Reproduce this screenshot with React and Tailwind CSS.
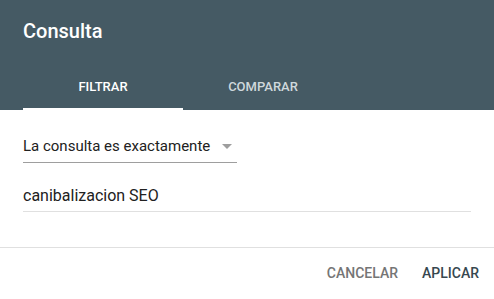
export default function App() {
  return (
    <div className="w-[494px] h-[299px] bg-white overflow-hidden" style={{ fontFamily: "Roboto, 'Liberation Sans', sans-serif" }}>
      <div className="bg-[#455a64] h-[110px] flex flex-col">
        <h1 className="pl-[23px] pt-[19px] text-[20px] leading-[24px] font-medium text-white">Consulta</h1>
        <div className="mt-auto flex pl-[23px]">
          <div className="w-[160px] h-[47px] flex flex-col">
            <span className="flex-1 flex items-center justify-center pt-[2px] text-[13px] font-medium text-white">FILTRAR</span>
            <span className="h-[2px] bg-white" />
          </div>
          <div className="w-[160px] h-[47px] flex flex-col">
            <span className="flex-1 flex items-center justify-center pt-[2px] text-[13px] font-medium text-[#cfd8dc]">COMPARAR</span>
            <span className="h-[2px]" />
          </div>
        </div>
      </div>
      <div className="pl-[23px] pr-[23px] pt-[24px]">
        <div className="w-[214px] h-[29px] flex items-center justify-between border-b border-[#9e9e9e] pb-[4px]">
          <span className="text-[15px] text-[#212121]">La consulta es exactamente</span>
          <svg width="10" height="5" viewBox="0 0 10 5" className="mr-[5px]">
            <path d="M0 0h10L5 5z" fill="#9e9e9e" />
          </svg>
        </div>
        <div className="mt-[19px] w-[448px] h-[30px] flex items-end border-b border-[#e0e0e0] pb-[5px]">
          <span className="text-[16px] leading-[20px] text-[#212121]">canibalizacion SEO</span>
        </div>
      </div>
      <div className="mt-[35px] border-t border-[#e0e0e0] flex justify-end items-center h-[52px] pr-[15px] gap-[24px]">
        <span className="text-[14px] font-medium text-[#757575]">CANCELAR</span>
        <span className="text-[14px] font-medium text-[#37474f]">APLICAR</span>
      </div>
    </div>
  );
}
